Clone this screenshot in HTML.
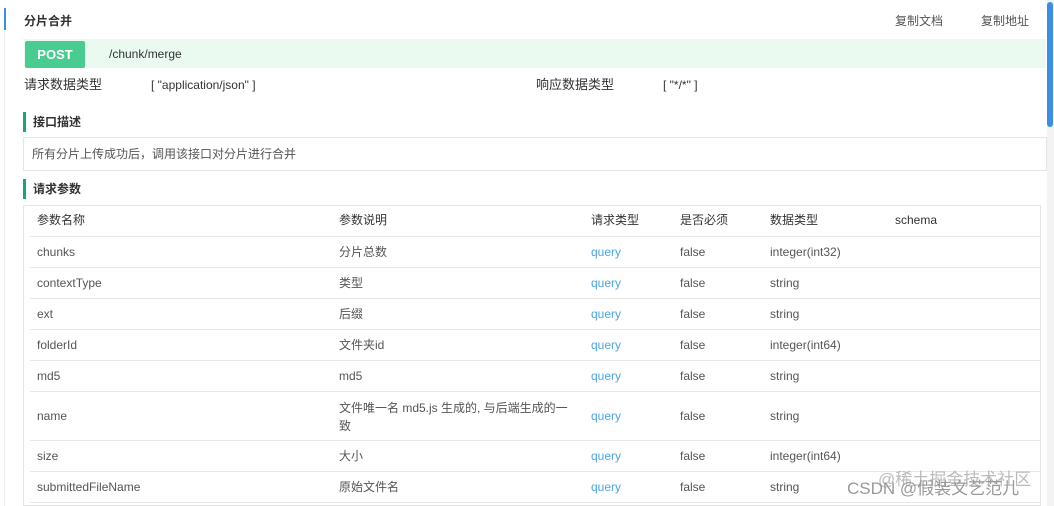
<!DOCTYPE html>
<html><head><meta charset="utf-8"><style>
*{margin:0;padding:0;box-sizing:border-box}
body{width:1054px;height:506px;overflow:hidden;background:#fff;font-family:"Liberation Sans","Noto Sans CJK SC",sans-serif;font-size:12px;color:#555;position:relative}
.a{position:absolute;white-space:nowrap;line-height:16px}
.lbar{position:absolute;left:4px;top:8px;width:2px;height:22px;background:#3a8ee6}
.lgrey{position:absolute;left:4px;top:30px;width:1px;height:476px;background:#eee}
.sb{position:absolute;left:1047px;top:0;width:7px;height:506px;background:#f3f3f3}
.sbt{position:absolute;left:1047px;top:2px;width:6px;height:125px;background:#3a8ee6;border-radius:3px}
.sec{position:absolute;left:23px;width:3px;height:20px;background:#17a57a}
.row{position:absolute;left:30px;width:1010px;border-top:1px solid #e8e8e8}
.q{color:#4ba5e6}
</style></head><body>
<div class="lbar"></div><div class="lgrey"></div>
<div class="a" style="left:24px;top:13px;font-weight:bold;color:#333">分片合并</div>
<div class="a" style="left:895px;top:13px;color:#555">复制文档</div>
<div class="a" style="left:981px;top:13px;color:#555">复制地址</div>
<div class="a" style="left:24px;top:39px;width:1022px;height:29px;background:#eafaf1"></div>
<div class="a" style="left:25px;top:41px;width:60px;height:27px;background:#49cc90;border-radius:2px;color:#fff;font-weight:bold;font-size:13px;text-align:center;line-height:27px">POST</div>
<div class="a" style="left:109px;top:46px;color:#333">/chunk/merge</div>
<div class="a" style="left:24px;top:77px;color:#333;font-size:13px">请求数据类型</div>
<div class="a" style="left:151px;top:77px;color:#333">[ "application/json" ]</div>
<div class="a" style="left:536px;top:77px;color:#333;font-size:13px">响应数据类型</div>
<div class="a" style="left:663px;top:77px;color:#333">[ "*/*" ]</div>
<div class="sec" style="top:112px"></div>
<div class="a" style="left:33px;top:114px;color:#333;font-weight:bold">接口描述</div>
<div class="a" style="left:23px;top:137px;width:1024px;height:34px;border:1px solid #e5e5e5"></div>
<div class="a" style="left:32px;top:146px;color:#555">所有分片上传成功后，调用该接口对分片进行合并</div>
<div class="sec" style="top:179px"></div>
<div class="a" style="left:33px;top:181px;color:#333;font-weight:bold">请求参数</div>
<div class="a" style="left:23px;top:205px;width:1018px;height:301px;border:1px solid #e5e5e5"></div>
<div class="a" style="left:37px;top:212px;color:#333">参数名称</div>
<div class="a" style="left:339px;top:212px;color:#333">参数说明</div>
<div class="a" style="left:591px;top:212px;color:#333">请求类型</div>
<div class="a" style="left:680px;top:212px;color:#333">是否必须</div>
<div class="a" style="left:770px;top:212px;color:#333">数据类型</div>
<div class="a" style="left:895px;top:212px;color:#333">schema</div>
<div class="row" style="top:236px"></div><div class="row" style="top:267px"></div><div class="row" style="top:298px"></div><div class="row" style="top:329px"></div><div class="row" style="top:360px"></div><div class="row" style="top:391px"></div><div class="row" style="top:440px"></div><div class="row" style="top:471px"></div><div class="row" style="top:502px"></div>
<div class="a" style="left:37px;top:244px">chunks</div><div class="a" style="left:339px;top:244px">分片总数</div><div class="a q" style="left:591px;top:244px">query</div><div class="a" style="left:680px;top:244px">false</div><div class="a" style="left:770px;top:244px">integer(int32)</div>
<div class="a" style="left:37px;top:275px">contextType</div><div class="a" style="left:339px;top:275px">类型</div><div class="a q" style="left:591px;top:275px">query</div><div class="a" style="left:680px;top:275px">false</div><div class="a" style="left:770px;top:275px">string</div>
<div class="a" style="left:37px;top:306px">ext</div><div class="a" style="left:339px;top:306px">后缀</div><div class="a q" style="left:591px;top:306px">query</div><div class="a" style="left:680px;top:306px">false</div><div class="a" style="left:770px;top:306px">string</div>
<div class="a" style="left:37px;top:337px">folderId</div><div class="a" style="left:339px;top:337px">文件夹id</div><div class="a q" style="left:591px;top:337px">query</div><div class="a" style="left:680px;top:337px">false</div><div class="a" style="left:770px;top:337px">integer(int64)</div>
<div class="a" style="left:37px;top:368px">md5</div><div class="a" style="left:339px;top:368px">md5</div><div class="a q" style="left:591px;top:368px">query</div><div class="a" style="left:680px;top:368px">false</div><div class="a" style="left:770px;top:368px">string</div>
<div class="a" style="left:37px;top:408px">name</div><div class="a" style="left:339px;top:399px;line-height:18px">文件唯一名 md5.js 生成的, 与后端生成的一<br>致</div><div class="a q" style="left:591px;top:408px">query</div><div class="a" style="left:680px;top:408px">false</div><div class="a" style="left:770px;top:408px">string</div>
<div class="a" style="left:37px;top:448px">size</div><div class="a" style="left:339px;top:448px">大小</div><div class="a q" style="left:591px;top:448px">query</div><div class="a" style="left:680px;top:448px">false</div><div class="a" style="left:770px;top:448px">integer(int64)</div>
<div class="a" style="left:37px;top:479px">submittedFileName</div><div class="a" style="left:339px;top:479px">原始文件名</div><div class="a q" style="left:591px;top:479px">query</div><div class="a" style="left:680px;top:479px">false</div><div class="a" style="left:770px;top:479px">string</div>
<div class="a" style="left:878px;top:470px;font-size:17px;line-height:20px;color:#bbb">@稀土掘金技术社区</div>
<div class="a" style="left:847px;top:479px;font-size:17px;line-height:20px;color:#999">CSDN @假装文艺范儿</div>
<div class="sb"></div><div class="sbt"></div>
</body></html>
